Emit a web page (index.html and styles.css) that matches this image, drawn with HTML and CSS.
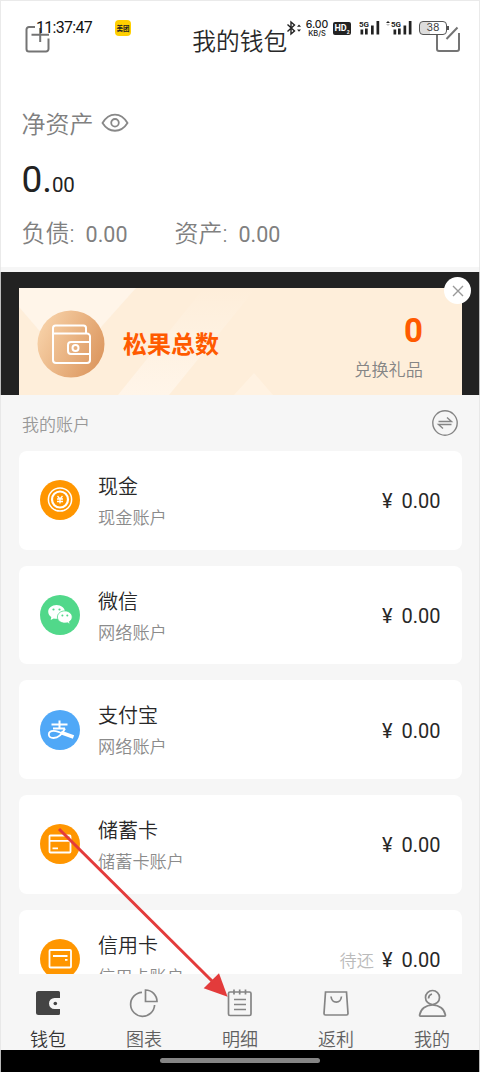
FILE: index.html
```html
<!DOCTYPE html>
<html lang="zh-CN">
<head>
<meta charset="utf-8">
<title>我的钱包</title>
<link rel="stylesheet" href="styles.css">
</head>
<body>
<div class="phone">
  <div class="status">
    <span class="clock">11:37:47</span>
    <span class="app-badge">美团</span>
    <svg class="bt" width="16" height="16" viewBox="0 0 16 16"><path d="M1.500 4.500l7 6.500-3.500 3V2L8.500 5l-7 6.500" fill="none" stroke="#222" stroke-width="1.400"/><path d="M11 6.800l2-2.300 2 2.300zM11 9.500l2 2.300 2-2.300z" fill="#222"/></svg>
    <span class="speed"><b>6.00</b><i>KB/S</i></span>
    <span class="hd">HD<sub>2</sub></span>
    <svg class="signal s1" width="22" height="16" viewBox="0 0 22 16"><path d="M1.500 9.500h2.700v5H1.500zM6 8.500h2.700v6H6zM12 5.500h2.700v9H12zM17.500 1h2.700v13.500h-2.700z" fill="#222"/><text x="0" y="7" class="gen">5G</text></svg>
    <svg class="signal s2" width="27" height="16" viewBox="0 0 27 16"><path d="M7.500 9.500h2.700v5H7.500zM12 8.500h2.700v6H12zM17.500 5.500h2.700v9h-2.700zM22.800 1h2.700v13.500h-2.700z" fill="#222"/><path d="M0 3l2-2 2 2z" fill="#222"/><path d="M0 4l2 2 2-2z" fill="#bbb"/><text x="5" y="7" class="gen">5G</text></svg>
    <span class="battery">38</span>
  </div>

  <header class="header">
    <svg width="26" height="28" viewBox="0 0 26 28" fill="none" stroke="#747474" stroke-width="2"><path d="M10 2H4a2.500 2.500 0 0 0-2.500 2.500v19.500A2.500 2.500 0 0 0 4 26.500h17a2.500 2.500 0 0 0 2.500-2.500V13.500M15.200 3v14M6.500 9.700H24"/></svg>
    <h1 class="title">我的钱包</h1>
    <svg width="26" height="28" viewBox="0 0 26 28" fill="none" stroke="#747474" stroke-width="2"><path d="M14 2.500H4A2 2 0 0 0 2 4.500v19.500a2 2 0 0 0 2 2h18a2 2 0 0 0 2-2V8M22.500 2.500L11.500 14"/></svg>
  </header>

  <section class="summary">
    <div class="net">净资产
      <svg width="28" height="20" viewBox="0 0 28 20" fill="none" stroke="#888" stroke-width="1.800"><path d="M1.500 10C8-1.300 20-1.300 26.500 10 20 20.300 8 20.300 1.500 10z"/><circle cx="14" cy="9.800" r="3.800"/></svg>
    </div>
    <div class="total">0.<small>00</small></div>
    <div class="split">
      <span class="pair">负债: <em>0.00</em></span>
      <span class="pair">资产: <em>0.00</em></span>
    </div>
  </section>

  <section class="promo">
    <div class="banner">
      <svg class="banner-bg" width="443" height="107" viewBox="0 0 443 107">
        <defs><linearGradient id="fade" x1="0" y1="0" x2="0" y2="1"><stop offset="0" stop-color="#fff5e9" stop-opacity="0"/><stop offset="1" stop-color="#fff5e9"/></linearGradient></defs>
        <path d="M0 0h117L49 76 0 19z" fill="#fff5e9"/>
        <path d="M99 107L185 0h52l-87 107z" fill="url(#fade)"/>
        <path d="M215 107l20-22 19 22z" fill="#fff2e2"/>
      </svg>
      <svg class="medal" width="68" height="68" viewBox="0 0 68 68">
        <defs><linearGradient id="copper" x1="0" y1=".2" x2="1" y2=".7"><stop offset="0" stop-color="#f8d3aa"/><stop offset="1" stop-color="#dc975f"/></linearGradient></defs>
        <circle cx="34" cy="34" r="33.500" fill="url(#copper)"/>
        <g fill="none" stroke="#fff" stroke-width="2"><path d="M16 23.500V18a2.500 2.500 0 0 1 2.500-2.500h28A2.500 2.500 0 0 1 49 18v5.500"/><path d="M16 22v28a3 3 0 0 0 3 3h31a3 3 0 0 0 3-3V26.500a3 3 0 0 0-3-3H16"/><path d="M53 32H34a3 3 0 0 0-3 3v6a3 3 0 0 0 3 3h19"/><circle cx="38.500" cy="38" r="3"/></g>
      </svg>
      <h2 class="promo-title">松果总数</h2>
      <div class="gift"><strong>0</strong><span>兑换礼品</span></div>
      <span class="close"><svg width="14" height="14" viewBox="0 0 14 14"><path d="M2 2l10 10M12 2L2 12" stroke="#999" stroke-width="1.400"/></svg></span>
    </div>
  </section>

  <div class="list-head">
    <span>我的账户</span>
    <svg width="26" height="26" viewBox="0 0 26 26" fill="none" stroke="#858585" stroke-width="1.400"><circle cx="13" cy="13" r="12.200"/><path d="M6.500 11.500h13l-4.500-4M19.500 14.500h-13l4.500 4"/></svg>
  </div>

  <main class="accounts">
    <article class="card">
      <svg class="icon" width="40" height="40" viewBox="0 0 40 40"><circle cx="20" cy="20" r="20" fill="#ff9600"/><g fill="none" stroke="#fff"><circle cx="20" cy="19.500" r="11.600" stroke-width="1.500"/><circle cx="20" cy="19.500" r="8" stroke-width="2.200"/><path d="M17.500 16l2.500 3 2.500-3M17 19h6M17 21.500h6M20 19v4.500" stroke-width="1.300"/></g></svg>
      <div class="info"><h3>现金</h3><p>现金账户</p></div>
      <div class="amount"><span>¥</span>0.00</div>
    </article>
    <article class="card">
      <svg class="icon" width="40" height="40" viewBox="0 0 40 40"><circle cx="20" cy="20" r="20" fill="#51d88a"/><path d="M16.500 10c-4.600 0-8.300 3-8.300 6.700 0 2.200 1.200 4 3.100 5.300l-.6 3 3-1.600c.9.200 1.800.3 2.800.3 4.600 0 8.500-3.100 8.500-6.900S21.100 10 16.500 10z" fill="#fff"/><path d="M24.800 15.900c-4.100 0-7.400 2.700-7.400 6.100s3.300 6.100 7.400 6.100c.9 0 1.800-.1 2.600-.4l2.700 1.500-.7-2.600c1.700-1.100 2.800-2.800 2.800-4.600 0-3.400-3.300-6.100-7.400-6.100z" fill="#fff" stroke="#51d88a" stroke-width=".8"/><g fill="#51d88a"><circle cx="13.500" cy="14.500" r="1.100"/><circle cx="19.500" cy="14.500" r="1.100"/><circle cx="22.400" cy="20.500" r="1"/><circle cx="27.300" cy="20.500" r="1"/></g></svg>
      <div class="info"><h3>微信</h3><p>网络账户</p></div>
      <div class="amount"><span>¥</span>0.00</div>
    </article>
    <article class="card">
      <svg class="icon" width="40" height="40" viewBox="0 0 40 40"><circle cx="20" cy="20" r="20" fill="#50a8f7"/><g fill="none" stroke="#fff"><path d="M11.500 14.500h16M19.500 10.500v8M13 18.600h12" stroke-width="2"/><path d="M25 18.500c-2 4-6 9.500-11.500 9.500-3 0-4.700-1.400-4.700-3.500 0-2.300 2-3.700 4.700-3.700 4 0 8 2 11 3.700" stroke-width="1.800"/><path d="M21 22.500l12.500 4.500" stroke-width="3.800"/></g></svg>
      <div class="info"><h3>支付宝</h3><p>网络账户</p></div>
      <div class="amount"><span>¥</span>0.00</div>
    </article>
    <article class="card">
      <svg class="icon" width="40" height="40" viewBox="0 0 40 40"><circle cx="20" cy="20" r="20" fill="#ff9600"/><g fill="none" stroke="#fff" stroke-width="1.800"><rect x="9.500" y="11.500" width="21" height="17" rx="1"/><path d="M9.500 16.800h21M12.500 24.300h5.500"/></g></svg>
      <div class="info"><h3>储蓄卡</h3><p>储蓄卡账户</p></div>
      <div class="amount"><span>¥</span>0.00</div>
    </article>
    <article class="card">
      <svg class="icon" width="40" height="40" viewBox="0 0 40 40"><circle cx="20" cy="20" r="20" fill="#ff9600"/><g fill="none" stroke="#fff" stroke-width="1.800"><rect x="9.500" y="11" width="21.500" height="17.500" rx="1"/><path d="M13 17h14.500M25 20.800h2.500"/></g></svg>
      <div class="info"><h3>信用卡</h3><p>信用卡账户</p></div>
      <div class="amount"><b>待还</b><span>¥</span>0.00</div>
    </article>
  </main>

  <nav class="tabs">
    <a class="tab active"><svg width="30" height="30" viewBox="0 0 30 30"><path d="M5.500 3h20A1.500 1.500 0 0 1 27 4.500V10h-5.500a5.500 5.500 0 0 0 0 11H27v4.500a1.500 1.500 0 0 1-1.500 1.500h-20A2.500 2.500 0 0 1 3 24.500v-19A2.500 2.500 0 0 1 5.500 3z" fill="#444"/><circle cx="22.300" cy="15.500" r="1.800" fill="#444"/></svg>钱包</a>
    <a class="tab"><svg width="30" height="30" viewBox="0 0 30 30"><path d="M13 4.300A12 12 0 1 0 25.600 17M16.500 2v11.500H28A11.500 11.500 0 0 0 16.500 2z"/></svg>图表</a>
    <a class="tab"><svg width="30" height="30" viewBox="0 0 30 30"><rect x="3.500" y="4" width="22.500" height="23.500" rx="1.500"/><path d="M9 1.500v5M14.700 1.500v5M20.500 1.500v5M9 11.500h12M9 16.500h12M9 21.500h12"/></svg>明细</a>
    <a class="tab"><svg width="30" height="30" viewBox="0 0 30 30"><path d="M5 4h20.500L27 25.500a1.500 1.500 0 0 1-1.500 1.500h-21A1.500 1.500 0 0 1 3 25.500L4.500 4zM10 8.500c1 7.500 9.500 7.500 10.500 0"/></svg>返利</a>
    <a class="tab"><svg width="30" height="30" viewBox="0 0 30 30"><circle cx="15.500" cy="9.500" r="7"/><path d="M11.500 10.500c.2-3 1.500-4 3.500-4.500"/><path d="M3.500 28.200h24c.8 0 1-.6.900-1.200-1-6-6-10-12.900-10S3.600 21 2.600 27c-.1.600.1 1.200.9 1.200z"/></svg>我的</a>
  </nav>
  <div class="gesture"><span></span></div>

  <svg class="pointer" width="172" height="172" viewBox="0 0 172 172"><path d="M2 2l154 153" stroke="#e33b3b" stroke-width="3"/><path d="M170.600 169.700L146.700 161.300 162 146.300z" fill="#e33b3b"/></svg>
</div>
</body>
</html>
```
FILE: styles.css
```css
* { box-sizing: border-box; }
body { margin: 0; background: #fff; }
h1, h2, h3, p { margin: 0; font-weight: 350; }
svg { display: block; flex: none; }

.phone {
  position: relative;
  display: flex;
  flex-direction: column;
  width: 480px;
  height: 1072px;
  overflow: hidden;
  background: #f6f6f6;
  font-family: Roboto, "Noto Sans CJK SC", sans-serif;
  font-weight: 350;
  color: #282828;
}
.phone::after {
  content: "";
  position: absolute;
  inset: 0;
  border: 1px solid #e5e5e5;
  border-bottom: 0;
  opacity: .8;
}

/* system status bar, drawn over the page header */
.status { position: absolute; inset: 0 0 auto; height: 56px; color: #222; }
.status > * { position: absolute; }
.clock { left: 36px; top: 18px; font: 400 16px/20px Roboto, sans-serif; letter-spacing: -.7px; white-space: nowrap; color: #111; }
.app-badge { left: 115px; top: 20px; width: 16px; height: 16px; border-radius: 4px; background: #ffd000; font: 700 6.500px/16px "Noto Sans CJK SC", sans-serif; text-align: center; }
.bt { left: 286px; top: 20px; }
.speed { left: 304px; top: 19px; width: 26px; display: flex; flex-direction: column; align-items: center; font-family: Inter, sans-serif; }
.speed b { font-size: 10.500px; line-height: 11px; font-weight: 500; }
.speed i { font-size: 7.500px; line-height: 7px; font-weight: 500; font-style: normal; }
.hd { left: 333px; top: 22px; width: 18px; height: 13px; border-radius: 2px; background: #222; color: #fff; font: 700 9px/12px Roboto, sans-serif; text-align: center; white-space: nowrap; }
.hd sub { font-size: 5px; line-height: 0; }
.s1 { left: 359px; top: 20px; }
.s2 { left: 386px; top: 20px; }
.gen { font: 700 8px Roboto, sans-serif; fill: #222; }
.battery { left: 419px; top: 21px; width: 28px; height: 14px; border: 1px solid #555; border-radius: 4px; background: linear-gradient(90deg, #ddd 38%, #fff 38%); font: 400 10.500px/12px Inter, sans-serif; text-align: center; color: #444; }
.battery::after { content: ""; position: absolute; right: -3px; top: 4px; width: 2px; height: 4px; background: #555; }

.header { display: flex; justify-content: space-between; height: 80px; padding: 25px 19px 0 24.500px; background: #fff; }
.title { margin-left: -6px; padding-top: 1px; font-size: 23.700px; line-height: 32px; white-space: nowrap; }

.summary { height: 187px; padding: 27px 22px 0 21.500px; background: #fff; color: #808080; }
.net { display: flex; align-items: center; gap: 7px; height: 36px; font-size: 24px; line-height: 36px; }
.net svg { margin-bottom: 5px; }
.total { height: 49px; margin-top: 12px; font-size: 37px; line-height: 49px; font-weight: 400; color: #222; }
.total small { font-size: 20.500px; letter-spacing: -.4px; }
.split { display: flex; gap: 47px; margin-top: 12px; font-size: 24px; line-height: 36px; }
.pair { display: flex; align-items: baseline; white-space: nowrap; }
.pair em { margin-left: 11px; font-size: 21.500px; font-weight: 400; font-style: normal; }

.promo { height: 128px; padding: 16px 18px 0 19px; border-top: 5px solid #f6f6f6; background: #222; }
.banner { position: relative; display: flex; align-items: center; height: 107px; padding: 4px 39px 0 18px; background: #feeeda; }
.banner-bg { position: absolute; inset: 0; }
.medal, .promo-title, .gift { position: relative; }
.promo-title { margin-left: 18px; padding-top: 2px; font-size: 24px; line-height: 32px; font-weight: 700; color: #ff5a00; }
.gift { display: flex; flex-direction: column; align-items: flex-end; gap: 8px; margin-left: auto; padding-top: 6px; font-size: 17.200px; line-height: 24px; color: #858585; }
.gift strong { font-size: 33px; line-height: 38px; font-weight: 700; color: #ff5a00; }
.close { position: absolute; right: -9px; top: -11px; display: flex; align-items: center; justify-content: center; width: 27px; height: 27px; border-radius: 50%; background: #fff; }

.list-head { display: flex; align-items: center; justify-content: space-between; height: 56px; padding: 0 22px; font-size: 17px; color: #999; }

.accounts { display: flex; flex-direction: column; gap: 16px; height: 523px; padding: 0 18.500px 0 19px; overflow: hidden; }
.card { display: flex; flex: none; align-items: center; height: 98.700px; padding: 0 21px; border-radius: 8px; background: #fff; }
.info { margin-left: 18px; padding-top: 4px; }
.info h3 { font-size: 20px; line-height: 32px; }
.info p { font-size: 17.200px; line-height: 31px; color: #8b8b8b; }
.amount { display: flex; align-items: baseline; margin-left: auto; padding-top: 2px; font-size: 20px; line-height: 28px; font-weight: 400; }
.amount span { margin-right: 9px; }
.amount b { margin-right: 8px; font-size: 17.200px; font-weight: 350; color: #bbb; }

.tabs { display: flex; justify-content: space-between; height: 76px; padding: 14px 18px 0; }
.tab { display: flex; flex-direction: column; align-items: center; gap: 8px; width: 60px; font-size: 18px; line-height: 28px; color: #606060; }
.tab svg { fill: none; stroke: #858585; stroke-width: 1.700; }
.tab.active { color: #333; }
.tab.active svg { stroke: none; }

.gesture { display: flex; justify-content: center; height: 22px; padding-top: 8px; background: #000; }
.gesture span { width: 160px; height: 5px; border-radius: 3px; background: #858585; }

.pointer { position: absolute; left: 57px; top: 827px; }
```
